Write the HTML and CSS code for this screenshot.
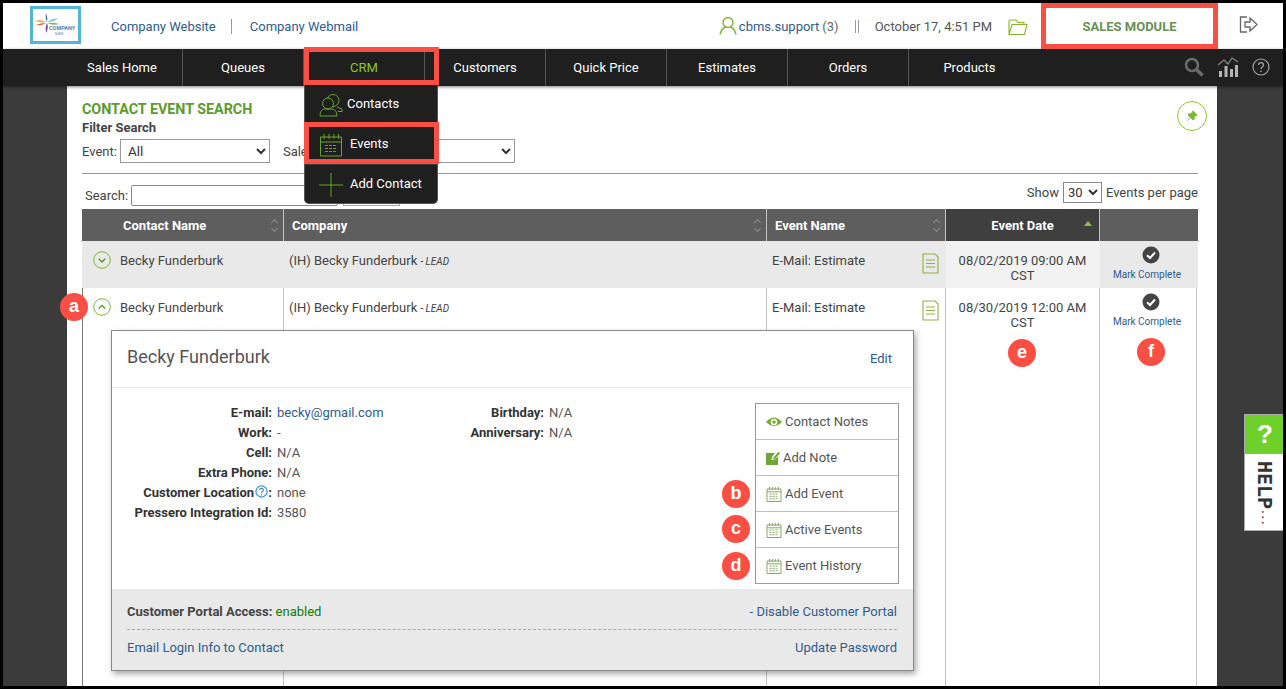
FILE: index.html
```html
<!DOCTYPE html>
<html lang="en">
<head>
<meta charset="utf-8">
<title>Contact Event Search</title>
<link rel="stylesheet" href="styles.css">
</head>
<body>
<div class="frame">
  <header class="topbar">
    <div class="logo">
      <svg class="logo-mark" width="24" height="20" viewBox="0 0 24 20"><path d="M11 0 Q10 6 12 9 Q13 5 11 0 Z" fill="#3d6fb5"/><path d="M0 8 Q6 6 11 9 Q6 10 0 8 Z" fill="#f0a030"/><path d="M1 12 Q6 10 11 10 Q6 13 1 12 Z" fill="#e2503a"/><path d="M11 20 Q10 14 12 10 Q14 15 11 20 Z" fill="#7c4fa0"/><path d="M23 5 Q17 6 12 9 Q18 9 23 5 Z" fill="#5cb8c8"/><path d="M24 11 Q18 9 12 10 Q18 13 24 11 Z" fill="#6fbf4a"/></svg>
      <span class="logo-name">COMPANY</span>
      <span class="logo-sub">NAME</span>
    </div>
    <div class="toplinks">
      <a class="toplink">Company Website</a>
      <span class="topsep"></span>
      <a class="toplink">Company Webmail</a>
    </div>
    <div class="topright">
      <svg class="user-ico" width="18" height="19" viewBox="0 0 18 19"><circle cx="9" cy="6.500" r="5" fill="none" stroke="#7cb82f" stroke-width="1.400"/><path d="M1 18.500 C2 13.500 5 11.500 6.500 11 M17 18.500 C16 13.500 13 11.500 11.500 11" fill="none" stroke="#7cb82f" stroke-width="1.400"/></svg>
      <a class="user-link">cbms.support</a><span class="user-count">(3)</span>
      <span class="dbl-sep"></span>
      <span class="datetime">October 17, 4:51 PM</span>
      <svg class="folder" width="20" height="17" viewBox="0 0 20 17"><path d="M1 15.500 V2 Q1 1 2 1 H8 L10 3.500 H16 V5.500 M1 15.500 L4 5.500 H19 L16.500 15.500 Z" fill="none" stroke="#8ab62f" stroke-width="1.100" stroke-linejoin="round"/></svg>
      <div class="module">SALES MODULE</div>
      <svg class="logout" width="19" height="17" viewBox="0 0 19 17"><path d="M8 1 H1.500 V16 H8 M6 6 H11 V2 L18 8.500 L11 15 V11 H6 Z" fill="none" stroke="#666" stroke-width="1.300"/></svg>
    </div>
  </header>

  <nav class="navbar">
    <a class="navitem">Sales Home</a>
    <a class="navitem">Queues</a>
    <a class="navitem navitem-active">CRM</a>
    <a class="navitem">Customers</a>
    <a class="navitem">Quick Price</a>
    <a class="navitem">Estimates</a>
    <a class="navitem">Orders</a>
    <a class="navitem navitem-last">Products</a>
    <div class="navtools">
      <svg width="20" height="20" viewBox="0 0 20 20"><circle cx="8" cy="8" r="6" fill="none" stroke="#6b6b6b" stroke-width="2.600"/><path d="M12.500 12.500 L18.500 18.500" stroke="#6b6b6b" stroke-width="3.400"/></svg>
      <svg width="22" height="20" viewBox="0 0 22 20"><path d="M1 8 L7 3 L11 7 L15 1 L21 5" fill="none" stroke="#8a8a8a" stroke-width="1.200"/><path d="M2 14 h3 v6 h-3 Z M7.500 9 h3 v11 h-3 Z M13 12 h3 v8 h-3 Z M18 8 h3 v12 h-3 Z" fill="#b5b5b5"/></svg>
      <svg width="18" height="18" viewBox="0 0 18 18"><circle cx="9" cy="9" r="8" fill="none" stroke="#a8a8a8" stroke-width="1.100"/><path d="M6.500 7 C6.500 3.800 11.500 4 11.500 7 C11.500 9 9 9 9 11" fill="none" stroke="#a8a8a8" stroke-width="1.200"/><circle cx="9" cy="13.300" r=".8" fill="#a8a8a8"/></svg>
    </div>
  </nav>

  <div class="stage">
    <main class="content">
      <div class="title-row">
        <div>
          <h1 class="page-title">CONTACT EVENT SEARCH</h1>
          <div class="filter-title">Filter Search</div>
        </div>
        <div class="pin">
          <svg width="12" height="12" viewBox="0 0 14 14"><path d="M8 1 L13 6 L11.500 6.500 L9.500 8.500 L9.500 11 L8 11.500 L2.500 6 L3 4.500 L5.500 4.500 L7.500 2.500 Z M5 9 L1.500 12.500" fill="#7cb82f" stroke="#7cb82f" stroke-width="1"/></svg>
        </div>
      </div>
      <div class="filters">
        <label class="flabel">Event:</label>
        <select class="fselect fselect-event"><option>All</option></select>
        <label class="flabel flabel-sales">Sales Rep:</label>
        <select class="fselect fselect-sales"><option></option></select>
      </div>
      <div class="tools-row">
        <div class="search-wrap">
          <label class="search-label">Search:</label>
          <input class="search-input" type="text">
          <span class="search-btn"></span>
        </div>
        <div class="perpage">
          <span>Show</span>
          <select class="perpage-select"><option>30</option></select>
          <span>Events per page</span>
        </div>
      </div>

      <div class="grid grid-head">
        <div class="th th-name">Contact Name<span class="sort"></span></div>
        <div class="th">Company<span class="sort"></span></div>
        <div class="th">Event Name<span class="sort"></span></div>
        <div class="th th-date">Event Date<span class="sort-up"></span></div>
        <div class="th th-blank"></div>
      </div>

      <div class="grid row row-shade">
        <div class="td td-name">
          <svg class="toggle" width="18" height="18" viewBox="0 0 18 18"><circle cx="9" cy="9" r="8.300" fill="none" stroke="#7cb82f" stroke-width="1"/><path d="M5.800 7.800 L9 11 L12.200 7.800" fill="none" stroke="#5c8f22" stroke-width="1.300"/></svg>
          Becky Funderburk
        </div>
        <div class="td">(IH) Becky Funderburk <span class="lead">- LEAD</span></div>
        <div class="td td-event">E-Mail: Estimate
          <svg class="doc" width="17" height="21" viewBox="0 0 17 21"><path d="M1 1 H13 L16 4 V20 H1 Z" fill="none" stroke="#8db43f" stroke-width="1.100"/><path d="M4 7 H13 M4 10.500 H13 M4 14 H13" stroke="#8db43f" stroke-width="1"/></svg>
        </div>
        <div class="td td-date td-date-shade">08/02/2019 09:00 AM<br>CST</div>
        <div class="td td-action">
          <svg class="check" width="18" height="18" viewBox="0 0 18 18"><circle cx="9" cy="9" r="8.500" fill="#444"/><path d="M5 9.300 L8 12 L13 6.500" fill="none" stroke="#fff" stroke-width="2"/></svg>
          <a class="mark">Mark Complete</a>
        </div>
      </div>

      <div class="grid row row-open">
        <div class="td td-name">
          <svg class="toggle" width="18" height="18" viewBox="0 0 18 18"><circle cx="9" cy="9" r="8.300" fill="none" stroke="#7cb82f" stroke-width="1"/><path d="M5.800 10.500 L9 7.300 L12.200 10.500" fill="none" stroke="#5c8f22" stroke-width="1.300"/></svg>
          Becky Funderburk
        </div>
        <div class="td">(IH) Becky Funderburk <span class="lead">- LEAD</span></div>
        <div class="td td-event">E-Mail: Estimate
          <svg class="doc" width="17" height="21" viewBox="0 0 17 21"><path d="M1 1 H13 L16 4 V20 H1 Z" fill="none" stroke="#8db43f" stroke-width="1.100"/><path d="M4 7 H13 M4 10.500 H13 M4 14 H13" stroke="#8db43f" stroke-width="1"/></svg>
        </div>
        <div class="td td-date">08/30/2019 12:00 AM<br>CST</div>
        <div class="td td-action">
          <svg class="check" width="18" height="18" viewBox="0 0 18 18"><circle cx="9" cy="9" r="8.500" fill="#444"/><path d="M5 9.300 L8 12 L13 6.500" fill="none" stroke="#fff" stroke-width="2"/></svg>
          <a class="mark">Mark Complete</a>
        </div>
      </div>

      <section class="popup">
        <div class="popup-head">
          <h2 class="popup-name">Becky Funderburk</h2>
          <a class="link edit-link">Edit</a>
        </div>
        <div class="popup-body">
          <dl class="facts facts-a">
            <dt>E-mail:</dt><dd><a class="link">becky@gmail.com</a></dd>
            <dt>Work:</dt><dd>-</dd>
            <dt>Cell:</dt><dd>N/A</dd>
            <dt>Extra Phone:</dt><dd>N/A</dd>
            <dt>Customer Location <svg class="qmark" width="13" height="13" viewBox="0 0 14 14"><circle cx="7" cy="7" r="6" fill="none" stroke="#3a8fd0" stroke-width="1.300"/><path d="M5 5.500 C5 3 9 3 9 5.500 C9 7 7 7 7 8.700" fill="none" stroke="#3a8fd0" stroke-width="1.300"/><circle cx="7" cy="10.500" r=".8" fill="#3a8fd0"/></svg>:</dt><dd>none</dd>
            <dt>Pressero Integration Id:</dt><dd>3580</dd>
          </dl>
          <dl class="facts facts-b">
            <dt>Birthday:</dt><dd>N/A</dd>
            <dt>Anniversary:</dt><dd>N/A</dd>
          </dl>
          <ul class="actions">
            <li class="action"><svg width="16" height="12" viewBox="0 0 16 12"><path d="M0 6 Q8 -3 16 6 Q8 14 0 6 Z" fill="#7aa83a"/><circle cx="8" cy="6" r="3.200" fill="#fff"/><circle cx="8" cy="6" r="1.800" fill="#7aa83a"/></svg>Contact Notes</li>
            <li class="action action-note"><svg width="14" height="14" viewBox="0 0 14 14"><path d="M0 2 H9 L6 6 L5.500 9 L8.500 8.500 L12 5.500 V14 H0 Z" fill="#6ea63a"/><path d="M7.500 6.500 L12.500 0.800 L14 2.300 L9 7.800 L7 8.300 Z" fill="#6ea63a"/></svg>Add Note</li>
            <li class="action"><svg class="cal" width="16" height="16" viewBox="0 0 16 16"><use href="#cal"/></svg>Add Event</li>
            <li class="action"><svg class="cal" width="16" height="16" viewBox="0 0 16 16"><use href="#cal"/></svg>Active Events</li>
            <li class="action"><svg class="cal" width="16" height="16" viewBox="0 0 16 16"><use href="#cal"/></svg>Event History</li>
          </ul>
        </div>
        <div class="popup-foot">
          <div class="foot-row foot-row-a">
            <span><b class="foot-label">Customer Portal Access:</b> <span class="enabled">enabled</span></span>
            <a class="link">- Disable Customer Portal</a>
          </div>
          <div class="foot-row">
            <a class="link">Email Login Info to Contact</a>
            <a class="link">Update Password</a>
          </div>
        </div>
      </section>
    </main>
  </div>

  <div class="dropdown">
    <a class="dd-item dd-contacts">
      <svg width="24" height="24" viewBox="0 0 24 24"><circle cx="14" cy="7.500" r="6" fill="none" stroke="#6aa32c" stroke-width="1"/><circle cx="9" cy="10.500" r="5.500" fill="#1f1f1f" stroke="#6aa32c" stroke-width="1"/><path d="M1 23 C1 18 3 16.500 5 16 H13 C16 16.500 17.500 18 18 23 Z" fill="none" stroke="#6aa32c" stroke-width="1"/><path d="M18 14 L23 16 V18.500 H19" fill="none" stroke="#6aa32c" stroke-width="1"/></svg>
      <span>Contacts</span>
    </a>
    <a class="dd-item dd-events">
      <svg width="24" height="24" viewBox="0 0 24 24"><path d="M1.500 4 H22.500 V23 H1.500 Z M1.500 9 H22.500 M5 1 V6 M10 1 V6 M15 1 V6 M19.500 1 V6" fill="none" stroke="#6aa32c" stroke-width="1"/><path d="M6 12.500 H18 M6 15.500 H18 M6 18.500 H18" stroke="#6aa32c" stroke-width="1" stroke-dasharray="3 1"/></svg>
      <span>Events</span>
    </a>
    <a class="dd-item dd-add">
      <svg width="24" height="24" viewBox="0 0 24 24"><path d="M12 0 V24 M0 12 H24" stroke="#6aa32c" stroke-width="1"/></svg>
      <span>Add Contact</span>
    </a>
  </div>

  <div class="mark-box mark-module"></div>
  <div class="mark-box mark-crm"></div>
  <div class="mark-box mark-events"></div>

  <span class="callout callout-a">a</span>
  <span class="callout callout-b">b</span>
  <span class="callout callout-c">c</span>
  <span class="callout callout-d">d</span>
  <span class="callout callout-e">e</span>
  <span class="callout callout-f">f</span>

  <div class="help">
    <div class="help-q">?</div>
    <div class="help-text">HELP<span class="help-dots">...</span></div>
  </div>

  <svg class="defs" width="0" height="0"><defs><g id="cal"><path d="M1 3 H15 V15.500 H1 Z M1 5.800 H15 M3.500 1 V4 M6.300 1 V4 M9.300 1 V4 M12.300 1 V4" fill="none" stroke="#85ab5c" stroke-width="1"/><path d="M3.500 8 H12.500 M3.500 10.300 H12.500 M3.500 12.800 H12.500" stroke="#85ab5c" stroke-width="1" stroke-dasharray="2 1"/></g></defs></svg>
</div>
</body>
</html>
```

FILE: styles.css
```css
* { box-sizing: border-box; }
html, body { margin: 0; padding: 0; height: 100%; overflow: hidden; }
body { font-family: Roboto, "Liberation Sans", sans-serif; font-size: 13px; color: #444; background: #000; }
a { text-decoration: none; }
ul, dl, dd, h1, h2 { margin: 0; padding: 0; }
ul { list-style: none; }

.frame { position: relative; width: 1286px; height: 689px; border: 3px solid #000; display: flex; flex-direction: column; overflow: hidden; background: #3b3b3b; }

.topbar { flex: 0 0 46px; background: #fff; display: flex; align-items: center; padding-left: 27px; color: #555; }
.logo { position: relative; width: 51px; height: 38px; margin-top: -2px; border: 3px solid #52b7d6; background: #fff; overflow: hidden; }
.logo-mark { position: absolute; left: 2px; top: 4px; }
.logo-name { position: absolute; left: 16px; top: 16px; font-size: 5.500px; line-height: 7px; font-weight: 700; color: #5a7fb8; }
.logo-sub { position: absolute; left: 22px; top: 23px; font-size: 3px; line-height: 4px; color: #5a7fb8; }
.toplinks { display: flex; align-items: center; margin-left: 30px; }
.toplink { color: #2e5c8f; }
.topsep { width: 1px; height: 15px; background: #999; margin: 0 18px 0 15px; }
.topright { display: flex; align-items: center; margin-left: auto; height: 100%; }
.user-ico { margin-right: 2px; margin-top: -1px; }
.user-link { color: #2e5c8f; }
.user-count { margin-left: 3px; color: #666; }
.dbl-sep { width: 4px; height: 13px; border-left: 1px solid #999; border-right: 1px solid #999; margin: 0 16px 0 16px; }
.datetime { color: #555; }
.folder { margin: 2px 0 0 16px; }
.module { width: 167px; margin-left: 18px; text-align: center; font-weight: 700; color: #6a8f56; font-size: 13px; }
.logout { margin: -3px 25px 0 26px; }

.navbar { position: relative; flex: 0 0 37px; background: #1f1f1f; display: flex; padding-left: 59px; box-shadow: 0 1px 3px rgba(0,0,0,.5); z-index: 2; }
.navitem { width: 121px; display: flex; align-items: center; justify-content: center; color: #fff; border-right: 1px solid #555; }
.navitem-last { border-right: 0; }
.navitem-active { color: #8ac926; }
.navtools { position: absolute; right: 13px; top: 8px; display: flex; gap: 13px; align-items: center; }

.stage { flex: 1; padding-left: 64px; padding-right: 66px; min-height: 0; }
.content { position: relative; height: 100%; background: #fff; padding: 0 19px 0 15px; overflow: hidden; }

.title-row { display: flex; justify-content: space-between; padding-top: 15px; height: 48px; }
.page-title { font-size: 14.300px; line-height: 17px; font-weight: 700; color: #5c9a2e; }
.filter-title { font-weight: 700; font-size: 13px; line-height: 20px; color: #444; }
.pin { width: 30px; height: 30px; margin-right: -9px; border: 1px solid #8ac926; border-radius: 50%; display: flex; align-items: center; justify-content: center; }

.filters { display: flex; align-items: center; height: 24px; margin-top: 5px; }
.flabel { margin-right: 3px; }
.flabel-sales { margin-left: 13px; }
.fselect { height: 24px; font: 13.500px Roboto, sans-serif; background: #fff; border: 1px solid #999; padding-left: 3px; color: #333; }
.fselect-event { width: 150px; }
.fselect-sales { width: 169px; }

.tools-row { display: flex; justify-content: space-between; align-items: center; border-top: 1px solid #999; margin-top: 10px; height: 36px; padding-top: 8px; }
.search-wrap { display: flex; align-items: center; padding-left: 3px; }
.search-label { margin-right: 3px; }
.search-input { width: 207px; height: 21px; border: 1px solid #888; border-radius: 2px; background: #fff; }
.search-btn { width: 57px; height: 21px; margin-left: 5px; border: 1px solid #aaa; }
.perpage { display: flex; align-items: center; gap: 4px; color: #444; margin-top: -6px; }
.perpage-select { width: 39px; height: 21px; border: 1px solid #888; background: #fff; font: 13px Roboto, sans-serif; color: #333; }

.grid { display: grid; grid-template-columns: 202px 483px 179px 154px 97px; }
.grid-head { height: 32px; background: #5e5e5e; }
.th { position: relative; display: flex; align-items: center; padding-left: 8px; color: #fff; font-weight: 700; font-size: 13px; border-right: 1px solid #c4c4c4; }
.th:last-child { border-right: 0; }
.th-name { padding-left: 41px; }
.th-date { background: #3f3f3f; justify-content: center; padding-left: 0; }
.sort { position: absolute; right: 5px; top: 10px; width: 8px; height: 13px; }
.sort::before, .sort::after { content: ""; position: absolute; left: 2px; width: 4px; height: 4px; border-left: 1px solid #8f8f8f; border-top: 1px solid #8f8f8f; transform: rotate(45deg); }
.sort::before { top: 1px; }
.sort::after { bottom: 1px; transform: rotate(225deg); }
.sort-up { position: absolute; right: 7px; top: 12px; border-left: 4px solid transparent; border-right: 4px solid transparent; border-bottom: 5px solid #8bc34a; }

.row { height: 47px; }
.row-shade { background: #e9e9e9; }
.row-open { height: 398px; }
.td { position: relative; padding: 12px 0 0 5px; font-size: 13px; line-height: 15px; color: #444; border-right: 1px solid #c4c4c4; }
.row-shade .td { border-right-color: transparent; }
.grid .td:first-child { border-left: 1px solid #777; }
.row-shade .td:first-child { border-left-color: transparent; }
.td-name { padding-left: 37px; }
.toggle { position: absolute; left: 10px; top: 10px; }
.lead { font-size: 10px; font-style: italic; }
.doc { position: absolute; right: 6px; top: 12px; }
.td-date { text-align: center; padding-left: 0; }
.td-date-shade { background: #f2f2f2; }
.td-action { display: flex; flex-direction: column; align-items: center; padding: 5px 2px 0 0; border-right: 1px solid #c4c4c4; }
.check { margin-left: 8px; }
.mark { margin-top: 3px; font-size: 10px; color: #2e5c8f; }

.popup { position: absolute; left: 44px; top: 244px; width: 803px; height: 341px; background: #fff; border: 1px solid #8a8a8a; box-shadow: 2px 3px 6px rgba(0,0,0,.35); display: flex; flex-direction: column; }
.popup-head { height: 57px; display: flex; justify-content: space-between; align-items: center; padding: 0 21px 0 15px; border-bottom: 1px solid #e8e8e8; }
.popup-name { font-size: 18px; font-weight: 400; color: #555; margin-top: -5px; }
.link { color: #2e5c8f; }
.edit-link { margin-top: -2px; }
.popup-body { position: relative; flex: 1; padding: 14px 0 0 0; display: flex; }
.facts { display: grid; grid-auto-rows: 20px; align-items: center; column-gap: 5px; }
.facts dt { text-align: right; font-weight: 700; color: #333; font-size: 13px; }
.facts dd { color: #555; }
.facts-a { width: 342px; grid-template-columns: 160px auto; }
.facts-b { width: 200px; margin-left: 16px; grid-template-columns: 74px auto; align-content: start; }
.qmark { vertical-align: -1px; margin-left: -2px; }
.actions { position: absolute; left: 643px; top: 15px; width: 144px; border: 1px solid #999; }
.action { height: 36px; display: flex; align-items: center; gap: 3px; padding-left: 10px; border-bottom: 1px solid #c0c0c0; color: #555; }
.action:last-child { border-bottom: 0; height: 35px; }
.cal { margin-top: 1px; }
.popup-foot { height: 81px; background: #e9e9e9; padding: 0 16px 0 15px; }
.foot-row { display: flex; justify-content: space-between; height: 36px; align-items: center; }
.foot-row-a { height: 41px; padding-top: 5px; border-bottom: 1px dashed #aaa; }
.foot-label { color: #444; font-size: 13px; }
.enabled { color: #0a7d0a; }
.foot-row:last-child { height: 35px; }

.dropdown { position: absolute; left: 301px; top: 82px; width: 134px; height: 119px; background: #1f1f1f; border: 1px solid #555; border-top: 0; border-radius: 0 0 5px 5px; z-index: 3; }
.dd-item { height: 40px; display: flex; align-items: center; padding-left: 14px; color: #fff; border-bottom: 1px solid #3c3c3c; }
.dd-item:last-child { border-bottom: 0; height: 39px; }
.dd-item span { margin-top: -2px; }
.dd-contacts { gap: 4px; }
.dd-events, .dd-add { gap: 7px; }

.mark-box { position: absolute; border: 5px solid #fb4e44; z-index: 4; pointer-events: none; }
.mark-module { left: 1038px; top: 0; width: 177px; height: 46px; }
.mark-crm { left: 301px; top: 44px; width: 135px; height: 38px; }
.mark-events { left: 301px; top: 119px; width: 135px; height: 42px; }

.callout { position: absolute; width: 28px; height: 28px; border-radius: 50%; background: #fb4e44; color: #fff; font: 700 18px/27px "Liberation Sans", sans-serif; text-align: center; z-index: 5; }
.callout-a { left: 57px; top: 290px; }
.callout-b { left: 719px; top: 477px; }
.callout-c { left: 719px; top: 512px; }
.callout-d { left: 719px; top: 549px; }
.callout-e { left: 1005px; top: 336px; }
.callout-f { left: 1134px; top: 335px; }

.help { position: absolute; right: -3px; top: 411px; width: 42px; height: 117px; border: 1px solid #aaa; background: #fff; z-index: 3; }
.help-q { height: 39px; background: #6fd02c; color: #fff; text-align: center; font: 700 26px/39px "Liberation Sans", sans-serif; }
.help-text { writing-mode: vertical-rl; font: 700 20px/24px "DejaVu Sans Mono", monospace; color: #333; padding: 7px 0 0 8px; }
.help-dots { font-size: 9px; }
.defs { position: absolute; }
```
